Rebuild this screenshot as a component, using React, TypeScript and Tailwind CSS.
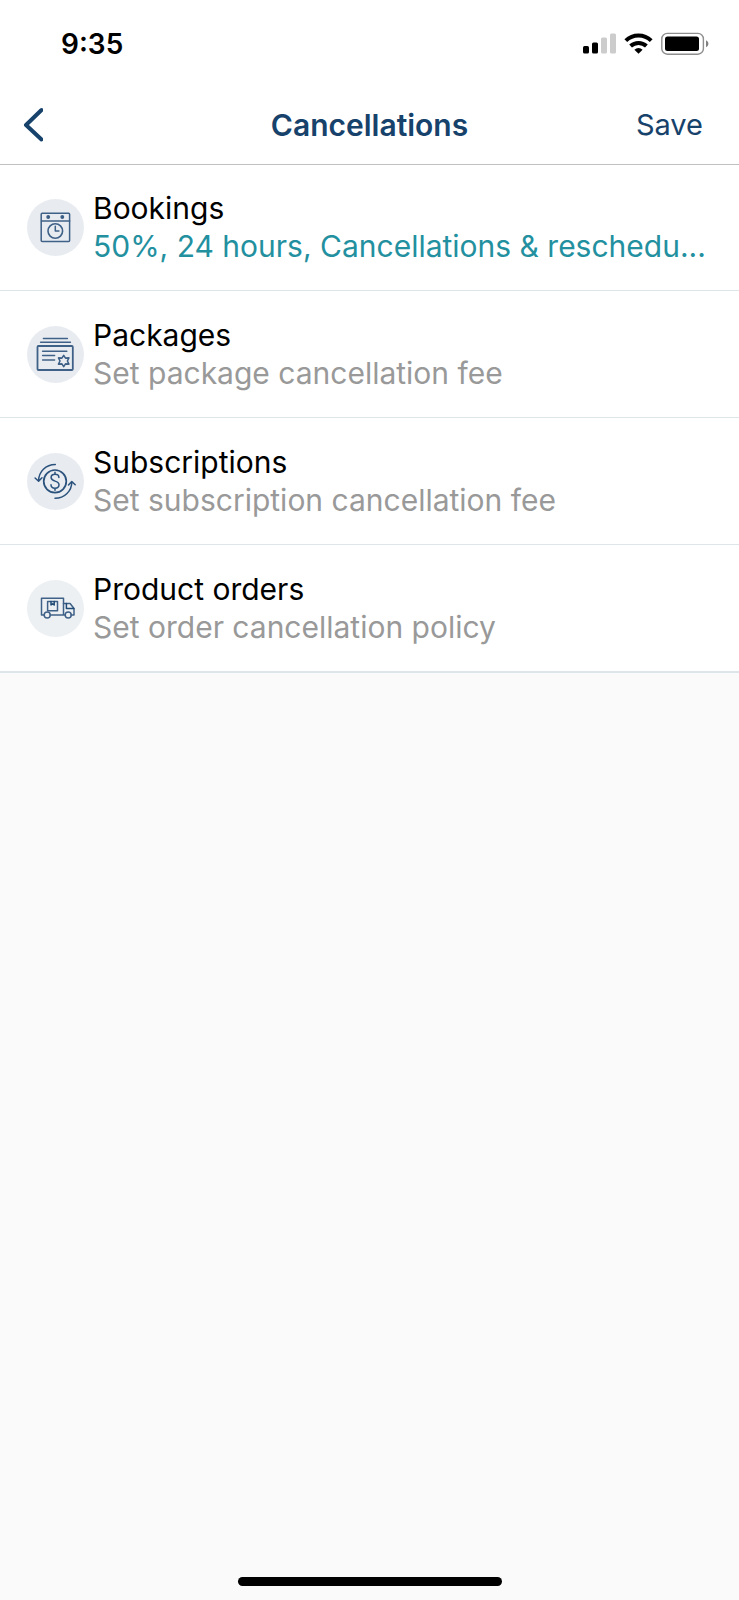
import type { ReactNode } from "react";

type Row = {
  title: string;
  detail: string;
  isSet?: boolean;
  icon: ReactNode;
};

const rows: Row[] = [
  { title: "Bookings", detail: "50%, 24 hours, Cancellations & reschedu...", isSet: true, icon: <BookingsIcon /> },
  { title: "Packages", detail: "Set package cancellation fee", icon: <PackagesIcon /> },
  { title: "Subscriptions", detail: "Set subscription cancellation fee", icon: <SubscriptionsIcon /> },
  { title: "Product orders", detail: "Set order cancellation policy", icon: <OrdersIcon /> },
];

function IconBase({ children, light = false }: { children: ReactNode; light?: boolean }) {
  return (
    <svg
      viewBox="0 0 57 57"
      className="h-[57px] w-[57px] shrink-0"
      fill="none"
      stroke="#3f6087"
      strokeWidth="1.5"
      strokeLinecap="round"
      strokeLinejoin="round"
      aria-hidden="true"
    >
      <circle cx="28.5" cy="28.5" r="28.5" fill={light ? "#ecf0f3" : "#e8ecf1"} stroke="none" />
      {children}
    </svg>
  );
}

function BookingsIcon() {
  return (
    <IconBase>
      <rect x="14.2" y="14.2" width="28.4" height="28.4" rx="1" />
      <path d="M14.5 22h28.2" />
      <circle cx="21.2" cy="18" r="1.2" fill="#1f4a75" />
      <circle cx="35.3" cy="18" r="1.2" fill="#1f4a75" />
      <circle cx="28.3" cy="32" r="7.3" strokeWidth="1.6" />
      <path d="M28.3 27.3v4.8h3.6" />
    </IconBase>
  );
}

function PackagesIcon() {
  return (
    <IconBase>
      <path d="M16.4 12.6h24M13.6 16.2h29.8" />
      <rect x="10.5" y="20" width="35.3" height="24" rx="1" strokeWidth="1.8" />
      <path d="M15.6 25.2h24.2M15.6 29.5h12M15.6 33.9h12" />
      <path
        d="M36.7 29.4l1.8 2.7 3.4-.2-1.5 3.1 1.5 3.1-3.4-.2-1.8 2.7-1.8-2.7-3.4.2 1.5-3.1-1.5-3.1 3.4.2z"
        strokeWidth="1.6"
      />
    </IconBase>
  );
}

function SubscriptionsIcon() {
  return (
    <IconBase>
      <g stroke="#2b527d">
        <circle cx="28" cy="28.3" r="11.3" strokeWidth="1.7" />
        <path d="M28.3 11.5C18.8 11.5 11.6 18.8 11.6 28M8.1 25l3.5 3.3 3.4-3.6" />
        <path d="M28 45.3c9.6 0 16.8-7.4 16.8-16.4M41.5 32l3.3-3.5 3.4 3.3" />
        <path d="M31.9 24.4c0-2-1.7-3.2-3.9-3.2s-3.9 1.2-3.9 3.3c0 4.6 7.9 2.6 7.9 7.3 0 2.2-1.7 3.4-4 3.4s-4-1.2-4-3.4M28 19.2v2M28 35.2v2.1" />
      </g>
    </IconBase>
  );
}

function OrdersIcon() {
  return (
    <IconBase light>
      <path d="M17 35h-2.5V18.2h22V35M23.3 35h15" />
      <rect x="20.6" y="21.5" width="9.9" height="9.2" />
      <path d="M24 21.5V25l1.6-1.2 1.6 1.2v-3.5" stroke="#1f4a75" />
      <path d="M36.5 23.5h6.6l3.9 5V35h-2.8" />
      <path d="M39.4 23.6v4.8h7.4" stroke="#1f4a75" />
      <circle cx="20.2" cy="35" r="3" />
      <circle cx="41.2" cy="35" r="3" />
    </IconBase>
  );
}

function StatusIcons() {
  return (
    <svg viewBox="0 0 128 24" className="h-6 w-32" aria-hidden="true">
      <rect x="1" y="14" width="6" height="7.5" rx="1.5" />
      <rect x="10" y="10.5" width="6" height="11" rx="1.5" />
      <rect x="19" y="5.5" width="6" height="16" rx="1.5" fill="#ccc" />
      <rect x="28" y="1.5" width="6" height="20" rx="1.5" fill="#ccc" />
      <g fill="none" stroke="#000" strokeWidth="4">
        <path d="M43.8 8.6a18.4 18.4 0 0 1 25.4 0" />
        <path d="M48.6 14a11.6 11.6 0 0 1 15.8 0" />
      </g>
      <path d="M56.5 21.8l-4.1-4.1a6 6 0 0 1 8.2 0z" />
      <rect x="79.8" y="1.4" width="41.6" height="20.8" rx="5.5" fill="none" stroke="#8e8e8e" strokeWidth="1.4" />
      <rect x="83" y="4.5" width="34" height="14.6" rx="2.5" />
      <path d="M124 8.2c3.2 1.4 3.2 5.6 0 7z" fill="#808080" />
    </svg>
  );
}

export default function App() {
  return (
    <div className="flex min-h-screen flex-col bg-[#fafafa] font-['Inter',sans-serif]">
      <header className="z-10 bg-white shadow-[0_1px_0_#c0c0c0]">
        <div className="flex h-[88px] items-center justify-between pr-[29px] pl-[61px]">
          <time className="text-[28px] leading-9 font-semibold text-black">9:35</time>
          <StatusIcons />
        </div>
        <div className="grid h-[74px] grid-cols-[1fr_auto_1fr] items-center text-[#17426b]">
          <button type="button" aria-label="Back" className="justify-self-start pl-[23px]">
            <svg viewBox="0 0 20 36" className="h-9 w-5" fill="none" stroke="currentColor" strokeWidth="4" strokeLinecap="round" strokeLinejoin="round">
              <path d="M18.5 3L3 18 18.5 32.5" />
            </svg>
          </button>
          <h1 className="text-[30px] leading-9 font-semibold">Cancellations</h1>
          <button type="button" className="justify-self-end pr-9 text-[29px] leading-9">
            Save
          </button>
        </div>
        <div className="h-0.5" />
      </header>
      <main className="flex-1">
        <ul className="border-b border-[#dce6ea] bg-white">
          {rows.map((row) => (
            <li key={row.title} className="border-b border-[#dfe6e9]">
              <button type="button" className="flex h-[126px] w-full items-center gap-[9px] px-[27px] text-left">
                {row.icon}
                <span className="flex min-w-0 flex-1 flex-col text-[30px] leading-[38px]">
                  <span className="text-black">{row.title}</span>
                  <span className={row.isSet ? "text-[#2390a0]" : "text-[#999]"}>{row.detail}</span>
                </span>
              </button>
            </li>
          ))}
        </ul>
      </main>
      <footer className="flex justify-center pb-3.5">
        <div className="h-[9px] w-[264px] rounded-full bg-black" />
      </footer>
    </div>
  );
}
